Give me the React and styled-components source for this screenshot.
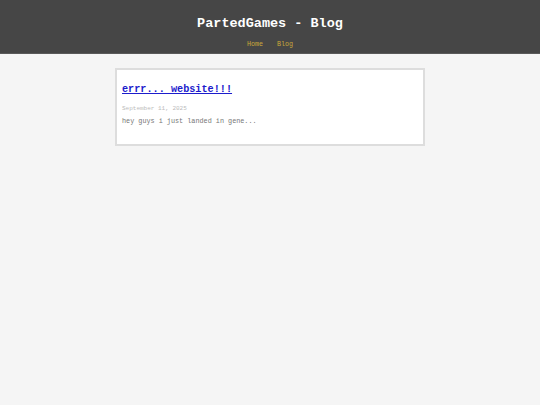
import React from "react";
import styled, { createGlobalStyle } from "styled-components";

const GlobalStyle = createGlobalStyle`
  html, body {
    margin: 0;
    padding: 0;
    background: #f5f5f5;
    font-family: "Liberation Mono", "Courier New", monospace;
  }
`;

const Header = styled.header`
  background: #464646;
  height: 54px;
  border-bottom: 1px solid #5a5a5a;
  display: flex;
  flex-direction: column;
  align-items: center;
  box-sizing: border-box;
  padding-top: 16px;
`;

const Title = styled.h1`
  margin: 0;
  font-size: 13.5px;
  line-height: 16px;
  font-weight: bold;
  color: #ffffff;
`;

const Nav = styled.nav`
  display: flex;
  gap: 14px;
  margin-top: 7px;
`;

const NavLink = styled.a`
  font-size: 6.7px;
  line-height: 10px;
  color: #c9a93a;
  text-decoration: none;
`;

const Main = styled.main`
  width: 310px;
  margin: 14px auto 0;
`;

const PostCard = styled.article`
  background: #ffffff;
  border: 2px solid #dddddd;
  box-sizing: border-box;
  height: 78px;
  padding: 13px 5px 0;
`;

const PostTitle = styled.a`
  display: block;
  width: max-content;
  font-size: 10.2px;
  line-height: 14px;
  font-weight: bold;
  color: #1c1ccc;
  text-decoration: underline;
`;

const PostDate = styled.div`
  margin-top: 7px;
  font-size: 6px;
  line-height: 10px;
  color: #bbbbbb;
`;

const Excerpt = styled.p`
  margin: 1px 0 0;
  font-size: 6.8px;
  line-height: 12px;
  color: #777777;
`;

const posts = [
  {
    title: "errr... website!!!",
    date: "September 11, 2025",
    excerpt: "hey guys i just landed in gene...",
  },
];

const App = () => (
  <>
    <GlobalStyle />
    <Header>
      <Title>PartedGames - Blog</Title>
      <Nav>
        <NavLink href="#">Home</NavLink>
        <NavLink href="#">Blog</NavLink>
      </Nav>
    </Header>
    <Main>
      {posts.map((post) => (
        <PostCard key={post.title}>
          <PostTitle href="#">{post.title}</PostTitle>
          <PostDate>{post.date}</PostDate>
          <Excerpt>{post.excerpt}</Excerpt>
        </PostCard>
      ))}
    </Main>
  </>
);

export default App;
